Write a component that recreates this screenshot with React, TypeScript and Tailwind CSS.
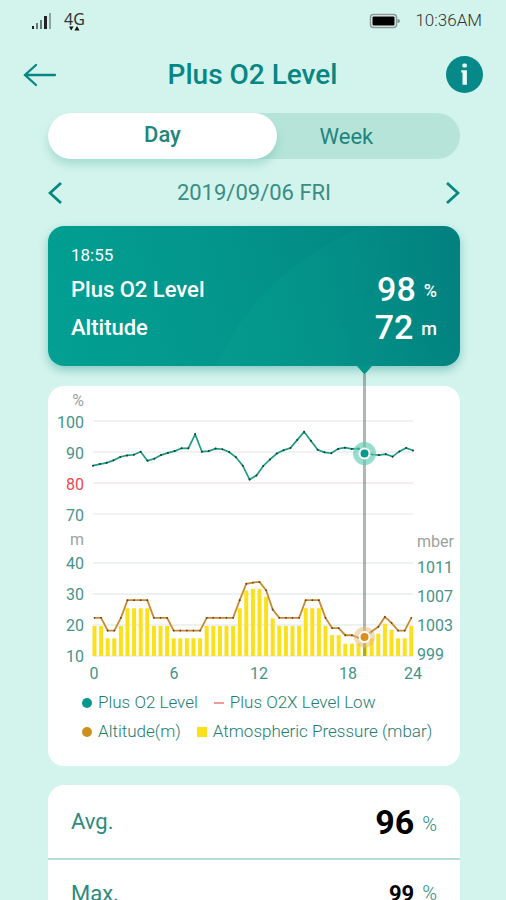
import { useState } from 'react'

const O2_LEVEL = [
  85.6, 86.1, 86.5, 87.3, 88.4, 88.9, 89.1, 90.1, 87.2, 87.8, 89, 89.7, 90.3, 91.2, 91.2, 95.7, 90.1, 90.3, 91.1, 90.9,
  90, 88.3, 85.6, 81.1, 82.4, 85.5, 87.6, 89.5, 90.6, 91.3, 93.9, 96.5, 93.6, 90.7, 89.9, 89.6, 91, 91.4, 91, 91.1,
  89.7, 89.2, 89, 89.3, 88.5, 90.2, 91.3, 90.5,
]

const ALTITUDE = [
  22.3, 22.3, 18.2, 18.2, 22.3, 28, 28, 28, 28, 22.3, 22.3, 22.3, 18.2, 18.2, 18.2, 18.2, 18.2, 22.3, 22.3, 22.3, 22.3,
  22.3, 28, 33.3, 33.7, 33.9, 31.2, 25, 22.3, 22.3, 22.3, 22.3, 28, 28, 28, 22.3, 19, 19, 16.7, 16.7, 15.9, 16.3, 17.9,
  19.4, 22.6, 20.7, 18.2, 18.2, 22.3,
]

const PRESSURE = [
  1002.9, 1002.9, 1001.3, 1001.3, 1002.9, 1005.2, 1005.2, 1005.2, 1005.2, 1002.9, 1002.9, 1002.9, 1001.3, 1001.3, 1001.3,
  1001.3, 1001.3, 1002.9, 1002.9, 1002.9, 1002.9, 1002.9, 1005.2, 1007.5, 1007.7, 1007.7, 1006.7, 1003.9, 1002.9, 1002.9,
  1002.9, 1002.9, 1005.2, 1005.2, 1005.2, 1002.9, 1001.7, 1001.7, 1000.6, 1000.6, 1000.6, 1000.6, 1001.3, 1001.9, 1003.2,
  1002.4, 1001.3, 1001.3, 1002.9,
]

const LEFT = 45
const RIGHT = 365
const BASE = 270
const CURSOR_X = 316.5

const o2X = (i: number) => LEFT + (i * (RIGHT - LEFT)) / (O2_LEVEL.length - 1)
const o2Y = (value: number) => 35 + (100 - value) * 3.1
const barX = (i: number) => 46.5 + i * 6.6
const altitudeY = (value: number) => BASE - (value - 10) * 3.1
const pressureY = (value: number) => BASE - (value - 999) * 7.7

const o2Points = O2_LEVEL.map((v, i) => ({ x: o2X(i), y: o2Y(v) }))
const altitudePoints = ALTITUDE.map((v, i) => ({ x: barX(i), y: altitudeY(v) }))

const toPolyline = (points: { x: number; y: number }[]) => points.map((p) => `${p.x},${p.y}`).join(' ')

function StatusBar() {
  return (
    <div className="flex h-[42px] items-center justify-between pl-[31px] pr-6">
      <div className="flex items-center gap-3">
        <svg width="21" height="18" viewBox="0 0 21 18" aria-hidden="true">
          <rect x="1" y="14" width="2" height="3" fill="#222" />
          <rect x="5" y="11" width="2" height="6" fill="#667a75" />
          <rect x="9" y="8" width="2" height="9" fill="#667a75" />
          <rect x="13" y="4" width="3" height="13" fill="#222" />
          <rect x="18" y="1" width="2" height="16" fill="#8fa39e" />
        </svg>
        <div className="flex flex-col items-center font-['Noto_Sans',sans-serif] text-base leading-[14px] text-[#333]">
          <span>4G</span>
          <svg width="12" height="5" viewBox="0 0 12 5" aria-hidden="true">
            <path d="M1 0.500h4.500L3.200 4.500zM6.500 4.500h5L9 0z" fill="#111" />
          </svg>
        </div>
      </div>
      <div className="flex items-center gap-3.5">
        <svg width="33" height="17" viewBox="0 0 33 17" aria-hidden="true">
          <rect x="2.500" y="1.500" width="26" height="13" rx="3" fill="#e4f7f2" stroke="#8b9a96" strokeWidth="1.500" />
          <rect x="4.500" y="3.500" width="22" height="9" rx="1" fill="#000" />
          <path d="M29.500 6q2.500 0 2.500 2t-2.500 2z" fill="#7d8d89" />
        </svg>
        <span className="text-[17px] font-light text-[#333]">10:36AM</span>
      </div>
    </div>
  )
}

function Header() {
  return (
    <header className="mt-3.5 flex items-center justify-between px-[23px]">
      <button type="button" aria-label="Back" className="flex h-9 w-9 items-center">
        <svg width="34" height="24" viewBox="0 0 34 24" fill="none" stroke="#078683" strokeWidth="2.300" strokeLinecap="round">
          <path d="M2 12h30M13 2L2 12l11 10" />
        </svg>
      </button>
      <h1 className="text-[28px] font-medium leading-8 text-[#078683]">Plus O2 Level</h1>
      <button type="button" aria-label="Information" className="h-[37px] w-[37px]">
        <svg viewBox="0 0 37 37" className="h-full w-full">
          <circle cx="18.500" cy="18.500" r="18.500" fill="#078889" />
          <rect x="16.300" y="7.500" width="4.600" height="4" rx="1.500" fill="#e9fbf7" />
          <path d="M15.200 14.300h5.700v14.500h-4.400v-12.200h-1.300z" fill="#e9fbf7" />
        </svg>
      </button>
    </header>
  )
}

function RangeSwitch() {
  const [range, setRange] = useState('day')
  const active = 'bg-white font-medium pb-1 shadow-[0_6px_8px_rgba(90,180,165,0.35)]'
  return (
    <div className="mt-5 flex h-[46px] rounded-full bg-[#b6e4d8] text-[22px] text-[#1f857d]">
      <button
        type="button"
        onClick={() => setRange('day')}
        className={`w-5/9 rounded-full ${range === 'day' ? active : ''}`}
      >
        Day
      </button>
      <button
        type="button"
        onClick={() => setRange('week')}
        className={`flex-1 rounded-full ${range === 'week' ? active : 'pr-11'}`}
      >
        Week
      </button>
    </div>
  )
}

function DatePicker() {
  return (
    <div className="flex h-[67px] items-center justify-between">
      <button type="button" aria-label="Previous day">
        <svg width="14" height="24" viewBox="0 0 14 24" fill="none" stroke="#078683" strokeWidth="2.800">
          <path d="M13 2L2 12L13 22" />
        </svg>
      </button>
      <span className="text-[22px] text-[#3a8c85]">2019/09/06 FRI</span>
      <button type="button" aria-label="Next day">
        <svg width="14" height="24" viewBox="0 0 14 24" fill="none" stroke="#078683" strokeWidth="2.800">
          <path d="M1 2L12 12L1 22" />
        </svg>
      </button>
    </div>
  )
}

function ReadingRow({ label, value, unit }: { label: string; value: string; unit: string }) {
  return (
    <div className="flex h-[38px] items-center justify-between font-medium">
      <span className="text-[22px]">{label}</span>
      <span className="flex items-center gap-2">
        <span className="text-[34px] leading-[38px]">{value}</span>
        <span className="pt-1 text-lg">{unit}</span>
      </span>
    </div>
  )
}

function ReadingCard() {
  return (
    <section className="relative h-[140px] overflow-hidden rounded-2xl bg-linear-[75deg,#02a093_0%,#03958c_45%,#02807f_100%] px-[23px] pt-[18px] text-white">
      <svg viewBox="0 0 412 140" className="absolute inset-0 h-full w-full" aria-hidden="true">
        <defs>
          <linearGradient id="arc" gradientUnits="userSpaceOnUse" x1="200" y1="70" x2="400" y2="50">
            <stop offset="0" stopColor="#06a08e" stopOpacity="0.350" />
            <stop offset="1" stopColor="#06a08e" stopOpacity="0" />
          </linearGradient>
        </defs>
        <circle cx="410" cy="250" r="266" fill="url(#arc)" />
      </svg>
      <div className="relative">
        <p className="h-[26px] text-[17px] leading-[22px]">18:55</p>
        <ReadingRow label="Plus O2 Level" value="98" unit="%" />
        <ReadingRow label="Altitude" value="72" unit="m" />
      </div>
    </section>
  )
}

function DayChart() {
  return (
    <svg viewBox="0 0 412 300" className="block w-full overflow-visible text-base" role="img" aria-label="Plus O2 Level and Altitude">
      {[100, 90, 80, 70].map((v) => (
        <g key={v}>
          <line x1={LEFT} x2={RIGHT} y1={o2Y(v)} y2={o2Y(v)} stroke={v === 80 ? '#ead9dc' : '#e2e4e4'} />
          <text x="36" y={o2Y(v) + 7} textAnchor="end" fill={v === 80 ? '#e9474f' : '#45938b'}>
            {v}
          </text>
        </g>
      ))}
      {[40, 30, 20, 10].map((v, i) => (
        <g key={v}>
          <line x1={LEFT} x2={RIGHT} y1={altitudeY(v)} y2={altitudeY(v)} stroke="#dbe5e3" />
          <text x="36" y={altitudeY(v) + 6} textAnchor="end" fill="#45938b">
            {v}
          </text>
          <text x="369" y={187 + i * 29} fill="#45938b">
            {1011 - i * 4}
          </text>
        </g>
      ))}
      <g fill="#9ba3a1">
        <text x="36" y="20" textAnchor="end">%</text>
        <text x="36" y="159" textAnchor="end">m</text>
        <text x="369" y="161">mber</text>
      </g>
      <g fill="#45938b" textAnchor="middle">
        <text x="46" y="293">0</text>
        <text x="126" y="293">6</text>
        <text x="211" y="293">12</text>
        <text x="300" y="293">18</text>
        <text x="365" y="293">24</text>
      </g>

      {PRESSURE.map((v, i) => (
        <rect key={i} x={barX(i) - 2} y={pressureY(v)} width="4" height={BASE - pressureY(v)} fill="#fae11c" />
      ))}

      <polyline points={toPolyline(altitudePoints)} fill="none" stroke="#c98a30" strokeWidth="1.800" />
      {altitudePoints.map((p, i) => (
        <circle key={i} cx={p.x} cy={p.y} r="0.900" fill="#5b3a1c" />
      ))}
      <polyline points={toPolyline(o2Points)} fill="none" stroke="#1d9c83" strokeWidth="1.700" />
      {o2Points.map((p, i) => (
        <circle key={i} cx={p.x} cy={p.y} r="1" fill="#173a35" />
      ))}

      {/* selected time */}
      <path d={`M${CURSOR_X - 8} -20.500h16l-8 9z`} fill="#03958a" />
      <line x1={CURSOR_X} x2={CURSOR_X} y1="-12" y2={BASE} stroke="#4d5f58" strokeOpacity="0.450" strokeWidth="3" />
      <circle cx={CURSOR_X} cy="67.500" r="11.500" fill="#5fcdb4" fillOpacity="0.650" />
      <circle cx={CURSOR_X} cy="67.500" r="5" fill="#06988a" stroke="#fff" strokeWidth="2" />
      <circle cx={CURSOR_X} cy="251" r="10.500" fill="#e8bc7c" fillOpacity="0.550" />
      <circle cx={CURSOR_X} cy="251" r="5" fill="#d98f1c" stroke="#fff" strokeWidth="2" />
    </svg>
  )
}

function Legend() {
  return (
    <div className="pb-5 pl-[34px] pt-0.5 text-[17px] font-light text-[#1d7d74]">
      <div className="flex h-[29px] items-center whitespace-nowrap">
        <span className="mr-1.5 h-2.5 w-2.5 rounded-full bg-[#06988a]" />
        <span>Plus O2 Level</span>
        <span className="ml-4 mr-1.5 h-0.5 w-2.5 bg-[#f0989c]" />
        <span>Plus O2X Level Low</span>
      </div>
      <div className="flex h-[29px] items-center whitespace-nowrap">
        <span className="mr-1.5 h-2.5 w-2.5 rounded-full bg-[#cf901f]" />
        <span>Altitude(m)</span>
        <span className="ml-4 mr-1.5 h-2.5 w-2.5 bg-[#fae11c]" />
        <span>Atmospheric Pressure (mbar)</span>
      </div>
    </div>
  )
}

function Stats() {
  return (
    <dl className="mt-[19px] rounded-t-2xl bg-white text-[22px] text-[#2d8a80]">
      <div className="flex h-[75px] items-center justify-between border-b-2 border-[#b5ddd4] px-[23px]">
        <dt>Avg.</dt>
        <dd className="flex items-center gap-2">
          <span className="text-[34px] font-bold leading-[38px] text-black">96</span>
          <span className="pt-1 text-xl font-light">%</span>
        </dd>
      </div>
      <div className="flex h-[66px] items-center justify-between px-[23px]">
        <dt>Max.</dt>
        <dd className="flex items-center gap-2">
          <span className="font-bold text-black">99</span>
          <span className="text-xl font-light">%</span>
        </dd>
      </div>
    </dl>
  )
}

export default function App() {
  return (
    <div className="h-screen overflow-hidden bg-[#d3f4ec] font-[Roboto,sans-serif]">
      <StatusBar />
      <Header />
      <main className="pl-12 pr-[46px]">
        <RangeSwitch />
        <DatePicker />
        <div className="rounded-2xl shadow-[0_4px_10px_rgba(40,150,150,0.45)]">
          <ReadingCard />
        </div>
        <section className="mt-5 rounded-2xl bg-white">
          <DayChart />
          <Legend />
        </section>
        <Stats />
      </main>
    </div>
  )
}
